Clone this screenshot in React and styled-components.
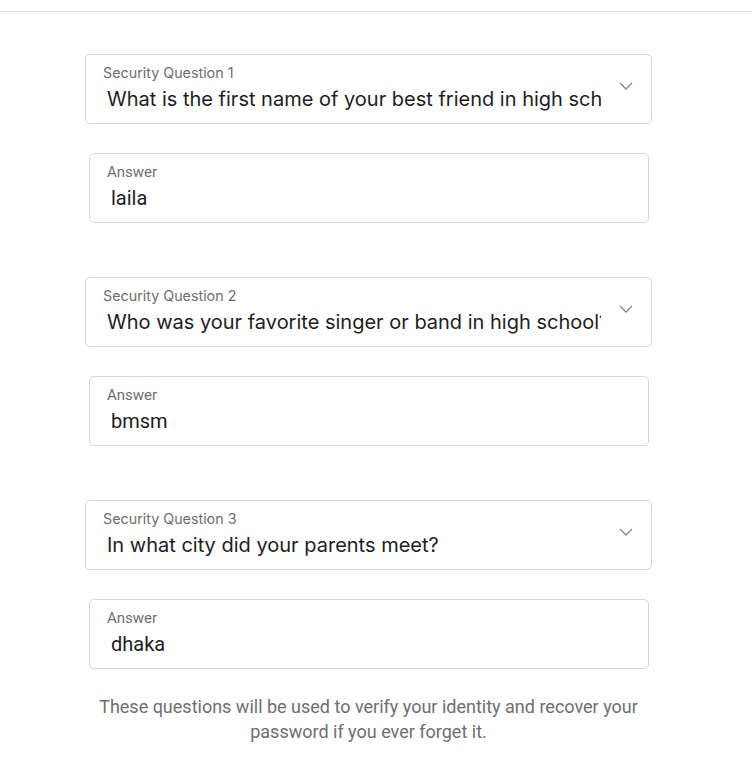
import React from 'react';
import styled, { createGlobalStyle } from 'styled-components';

const questions = [
  { label: 'Security Question 1', question: 'What is the first name of your best friend in high school?', answer: 'laila' },
  { label: 'Security Question 2', question: 'Who was your favorite singer or band in high school?', answer: 'bmsm' },
  { label: 'Security Question 3', question: 'In what city did your parents meet?', answer: 'dhaka' },
];

export default function App() {
  return (
    <>
      <GlobalStyle />
      <TopRule />
      <Form>
        {questions.map((q, index) => (
          <Group key={index}>
            <SelectBox>
              <QuestionLabel>{q.label}</QuestionLabel>
              <SelectValue>{q.question}</SelectValue>
              <Chevron viewBox="0 0 14 8" aria-hidden="true">
                <path d="M1 1l6 6 6-6" fill="none" stroke="#86868b" strokeWidth="1.3" />
              </Chevron>
            </SelectBox>
            <AnswerBox>
              <AnswerLabel>Answer</AnswerLabel>
              <AnswerValue>{q.answer}</AnswerValue>
            </AnswerBox>
          </Group>
        ))}
        <Note>
          These questions will be used to verify your identity and recover your
          password if you ever forget it.
        </Note>
      </Form>
    </>
  );
}

const GlobalStyle = createGlobalStyle`
  body {
    margin: 0;
    background: #fff;
    font-family: Roboto, "Liberation Sans", sans-serif;
  }
`;

const TopRule = styled.div`
  height: 11px;
  border-bottom: 1px solid #e6e6e6;
`;

const Form = styled.div`
  width: 567px;
  margin-left: 85px;
  padding-top: 42px;
  display: flex;
  flex-direction: column;
  gap: 54px;
`;

const Group = styled.div`
  display: flex;
  flex-direction: column;
  gap: 29px;
`;

const Field = styled.div`
  position: relative;
  box-sizing: border-box;
  height: 70px;
  border: 1px solid #d6d6d6;
  border-radius: 5px;
  background: #fff;
`;

const SelectBox = styled(Field)`
  padding: 10px 50px 0 17px;
`;

const AnswerBox = styled(Field)`
  margin: 0 3px 0 4px;
  padding: 10px 17px 0 17px;
`;

const QuestionLabel = styled.div`
  font-family: Inter, Roboto, sans-serif;
  font-size: 14.3px;
  line-height: 16px;
  color: #6e6e73;
`;

const AnswerLabel = styled.div`
  font-size: 15px;
  line-height: 16px;
  color: #6e6e73;
`;

const SelectValue = styled.div`
  margin: 5px 0 0 4px;
  font-family: Inter, Roboto, sans-serif;
  font-size: 20px;
  line-height: 26px;
  color: #1d1d1f;
  white-space: nowrap;
  overflow: hidden;
`;

const AnswerValue = styled.div`
  margin: 5px 0 0 4px;
  font-size: 20px;
  line-height: 26px;
  color: #1d1d1f;
  white-space: nowrap;
  overflow: hidden;
`;

const Chevron = styled.svg`
  position: absolute;
  right: 18px;
  top: 27px;
  width: 14px;
  height: 8px;
`;

const Note = styled.p`
  margin: -29px 0 0;
  text-align: center;
  font-size: 18px;
  line-height: 25px;
  color: #6e6e73;
`;
